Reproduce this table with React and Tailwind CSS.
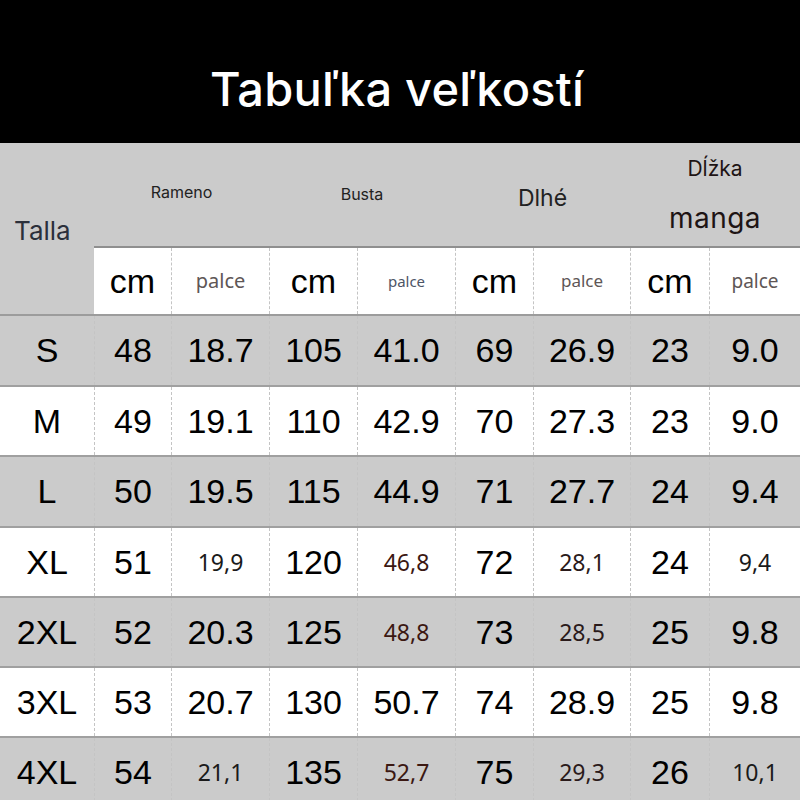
const cols = "grid-cols-[94px_77px_98px_88px_98px_78px_97px_79px_91px]";

const rows = [
  { size: "S", v: ["48", "18.7", "105", "41.0", "69", "26.9", "23", "9.0"], gray: true, h: "h-[71px]" },
  { size: "M", v: ["49", "19.1", "110", "42.9", "70", "27.3", "23", "9.0"] },
  { size: "L", v: ["50", "19.5", "115", "44.9", "71", "27.7", "24", "9.4"], gray: true, h: "h-[71px]" },
  { size: "XL", v: ["51", "19,9", "120", "46,8", "72", "28,1", "24", "9,4"], small: [1, 3, 5, 7] },
  { size: "2XL", v: ["52", "20.3", "125", "48,8", "73", "28,5", "25", "9.8"], gray: true, small: [3, 5] },
  { size: "3XL", v: ["53", "20.7", "130", "50.7", "74", "28.9", "25", "9.8"] },
  { size: "4XL", v: ["54", "21,1", "135", "52,7", "75", "29,3", "26", "10,1"], gray: true, small: [1, 3, 5, 7] },
];

const smallColor = ["text-[#1a1a1a]", "text-[#1a1a1a]", "text-[#3b1812]", "text-[#3b1812]", "text-[#2a1a1a]", "text-[#2a1a1a]", "text-[#1a1a1a]", "text-[#1a1a1a]"];

function Cell({ children, first, className = "" }) {
  return (
    <div
      className={
        "flex items-center justify-center " +
        (first ? "" : "border-l border-dashed border-[#c4c4c4] ") +
        className
      }
    >
      {children}
    </div>
  );
}

export default function App() {
  return (
    <div className="w-[800px] h-[800px] overflow-hidden bg-white font-['Liberation_Sans',Arial,sans-serif]">
      {/* title */}
      <div className="h-[143px] bg-black flex items-center justify-center pt-[36px] pr-[6px]">
        <h1 className="text-white text-[47px] font-medium font-['Inter',sans-serif] tracking-[0.2px]">
          Tabuľka veľkostí
        </h1>
      </div>

      {/* header */}
      <div className={`grid ${cols} grid-rows-[103px_68px] bg-[#cbcbcb] border-b-2 border-[#9c9c9c]`}>
        <div className="row-span-2 flex items-center pl-[14px] pt-[4px] text-[26px] text-[#2b303b] font-['Inter',sans-serif]">
          Talla
        </div>
        <div className="col-span-2 flex justify-center pt-[37px] text-[16px] text-[#222] font-['Inter',sans-serif]">
          Rameno
        </div>
        <div className="col-span-2 flex justify-center pt-[39px] text-[16px] text-[#222] font-['Inter',sans-serif]">
          Busta
        </div>
        <div className="col-span-2 flex justify-center pt-[38px] text-[23px] text-[#222] font-['Inter',sans-serif]">
          Dlhé
        </div>
        <div className="col-span-2 flex flex-col items-center pt-[10px] font-['Inter',sans-serif] text-[#1e1414]">
          <span className="text-[21px]">Dĺžka</span>
          <span className="text-[28px] mt-[12px] tracking-[0.5px]">manga</span>
        </div>

        <div className="col-span-8 grid grid-cols-[77px_98px_88px_98px_78px_97px_79px_91px] bg-white border-t-2 border-[#8f8f8f]">
          <Cell first className="text-[34px] text-black">cm</Cell>
          <Cell className="text-[20px] text-[#5e5656] font-['Noto_Sans',sans-serif]">palce</Cell>
          <Cell className="text-[34px] text-black">cm</Cell>
          <Cell className="text-[15px] text-[#4d5566] font-['Noto_Sans',sans-serif]">palce</Cell>
          <Cell className="text-[34px] text-black">cm</Cell>
          <Cell className="text-[17px] text-[#5e5656] font-['Noto_Sans',sans-serif]">palce</Cell>
          <Cell className="text-[34px] text-black">cm</Cell>
          <Cell className="text-[19px] text-[#5e5656] font-['Noto_Sans',sans-serif]">palce</Cell>
        </div>
      </div>

      {/* data rows */}
      {rows.map((r) => (
        <div
          key={r.size}
          className={`grid ${cols} ${r.h || "h-[70px]"} border-b-2 border-[#a0a0a0] ${r.gray ? "bg-[#cbcbcb]" : "bg-white"}`}
        >
          <Cell first className="text-[34px] text-black">{r.size}</Cell>
          {r.v.map((val, i) => {
            const small = r.small && r.small.includes(i);
            return (
              <Cell
                key={i}
                className={
                  small
                    ? `text-[23px] font-['Noto_Sans',sans-serif] ${smallColor[i]}`
                    : "text-[34px] text-black"
                }
              >
                {val}
              </Cell>
            );
          })}
        </div>
      ))}
    </div>
  );
}
